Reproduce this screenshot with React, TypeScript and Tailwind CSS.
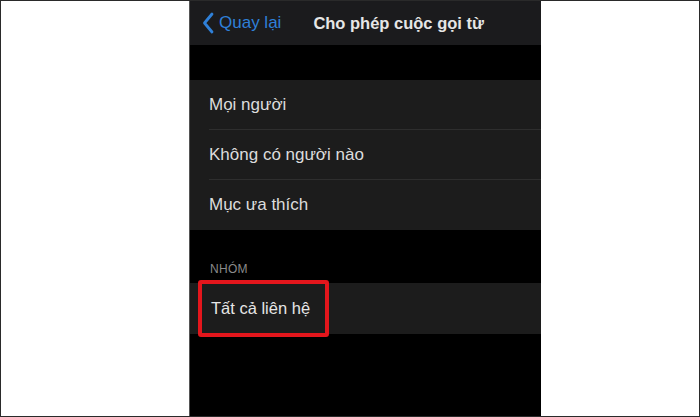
import React from 'react';

const rows = ['Mọi người', 'Không có người nào', 'Mục ưa thích'];

const App: React.FC = () => {
  return (
    <div className="w-[700px] h-[417px] bg-white border border-[#2a2a2a] flex font-['Liberation_Sans',Arial,sans-serif] overflow-hidden">
      <div className="w-[188px] shrink-0" />
      {/* Phone screen */}
      <div className="w-[352px] h-full bg-black border-l border-[#555] flex flex-col">
        {/* Nav bar */}
        <div className="h-[44px] bg-[#1b1b1d] flex items-center pl-[12px]">
          <svg width="12" height="22" viewBox="0 0 12 22" className="shrink-0">
            <path d="M10 2 L2.5 11 L10 20" fill="none" stroke="#2f80d8" strokeWidth="2.8" strokeLinecap="round" strokeLinejoin="round" />
          </svg>
          <span className="ml-[5px] text-[17px] text-[#2f80d8]">Quay lại</span>
          <span className="ml-[32px] text-[16.5px] font-semibold text-[#e6e6e6]">Cho phép cuộc gọi từ</span>
        </div>
        <div className="h-[35px]" />
        {/* First group */}
        <div className="bg-[#1c1c1c] flex flex-col">
          {rows.map((r, i) => (
            <div key={r} className="pl-[19px]">
              <div className={`h-[50px] flex items-center text-[17px] text-[#dcdcdc] ${i < rows.length - 1 ? 'border-b border-[#2e2e2e]' : ''}`}>
                {r}
              </div>
            </div>
          ))}
        </div>
        {/* Section header */}
        <div className="h-[53px] flex items-end pl-[20px] pb-[5px]">
          <span className="text-[12px] text-[#8a8a8a] tracking-wide">NHÓM</span>
        </div>
        {/* Second group */}
        <div className="bg-[#1c1c1c] h-[51px] flex items-center pl-[8px]">
          <div className="h-[57px] w-[131px] border-[4px] border-[#e3161c] rounded-[3px] flex items-center pl-[9px] text-[16.5px] text-[#e6e6e6]">
            Tất cả liên hệ
          </div>
        </div>
        <div className="flex-1" />
      </div>
    </div>
  );
};

export default App;
